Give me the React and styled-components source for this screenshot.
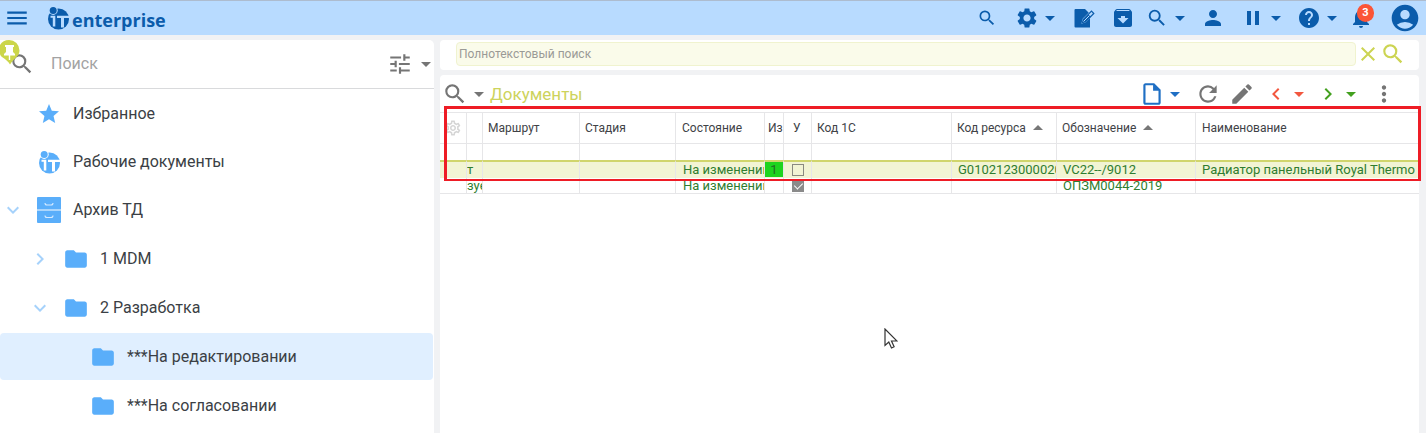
import React from "react";
import styled, { createGlobalStyle } from "styled-components";
import {
  MdMenu, MdSearch, MdSettings, MdOutlineSettings, MdArrowDropDown, MdArrowDropUp, MdArchive,
  MdPerson, MdPause, MdHelp, MdNotifications, MdAccountCircle, MdTune, MdStar,
  MdExpandMore, MdChevronRight, MdChevronLeft, MdFolder, MdClose, MdRefresh,
  MdEdit, MdMoreVert, MdOutlineInsertDriveFile,
} from "react-icons/md";

const Global = createGlobalStyle`
  * { box-sizing: border-box; }
  body { margin: 0; background: #f1f2f4; font-family: Roboto, "Open Sans", sans-serif; color: #3c4043; }
  button { border: 0; padding: 0; background: none; font: inherit; color: inherit; cursor: pointer; }
  svg { display: block; flex: none; }
`;

const GAPS = { s: 6, m: 10, l: 16 };

const Page = styled.div`
  min-height: 100vh;
  display: flex;
  flex-direction: column;
`;

const Header = styled.header`
  height: 35px;
  flex: none;
  display: flex;
  align-items: center;
  padding: 0 5px;
  border-top: 1px solid #adbccf;
  background: #b8dbff;
  color: #0b5cab;
`;

const Brand = styled.a`
  display: flex;
  align-items: center;
  gap: 2px;
  margin-left: 17px;
  color: inherit;
  text-decoration: none;
  font: 700 18px/24px "Open Sans", sans-serif;
`;

const BrandName = styled.span`
  padding-top: 3px;
`;

const Tools = styled.div`
  display: flex;
  align-items: center;
  margin-left: auto;
`;

const ToolGroup = styled.div`
  display: flex;
  align-items: center;
  margin-left: ${(p) => GAPS[p.$gap || "m"]}px;
  color: ${(p) => p.$color || "inherit"};
`;

const IconButton = styled.button`
  width: ${(p) => p.$w || 24}px;
  height: 28px;
  display: flex;
  align-items: center;
  justify-content: center;
  position: relative;
`;

const Badge = styled.span`
  position: absolute;
  left: 8px;
  top: 0;
  width: 17px;
  height: 18px;
  border-radius: 9px;
  background: #fb5537;
  color: #fff;
  font-size: 11px;
  font-weight: 700;
  line-height: 18px;
  text-align: center;
`;

const Main = styled.main`
  flex: 1;
  display: grid;
  grid-template-columns: 434px minmax(0, 1fr);
  column-gap: 6px;
  padding: 5px 7px 0 0;
`;

const Sidebar = styled.aside`
  position: relative;
  background: #fff;
  border-radius: 0 5px 0 0;
`;

const SideSearch = styled.div`
  height: 49px;
  display: flex;
  align-items: center;
  padding-left: 9px;
  border-bottom: 1px solid #d9dadc;
  color: #757575;
`;

const SideInput = styled.input`
  flex: 1;
  min-width: 0;
  margin-left: 14px;
  border: 0;
  outline: 0;
  background: none;
  font: 16px/24px Roboto, sans-serif;
  &::placeholder { color: #a3a3a3; opacity: 1; }
`;

const SideActions = styled.div`
  display: flex;
  align-items: center;
  gap: 2px;
  margin-right: -3px;
`;

const Pin = styled.span`
  position: absolute;
  left: 0;
  top: 0;
`;

const Tree = styled.ul`
  list-style: none;
  margin: 0;
  padding: 0 1px 0 0;
`;

const TreeRow = styled.button`
  width: 100%;
  height: 47px;
  margin-top: ${(p) => (p.$level ? 2 : 1)}px;
  padding-left: ${(p) => p.$level * 27}px;
  display: flex;
  align-items: center;
  gap: 10px;
  border-radius: 4px;
  background: ${(p) => (p.$active ? "#e0efff" : "transparent")};
  color: #3b3f45;
  font-size: 16px;
  line-height: 24px;
`;

const TreeSlot = styled.span`
  width: 26px;
  display: flex;
  justify-content: center;
  color: ${(p) => p.$color};
`;

const TreeLabel = styled.span`
  padding-left: 1px;
`;

const Content = styled.section`
  display: flex;
  flex-direction: column;
  gap: 5px;
  min-width: 0;
`;

const SearchPanel = styled.div`
  height: 30px;
  display: flex;
  align-items: flex-start;
  padding: 2px 13px 0 16px;
  border-radius: 4px;
  background: #fff;
`;

const FullText = styled.input`
  flex: 1;
  min-width: 0;
  height: 24px;
  padding: 0 2px;
  border: 1px solid #f0f3cf;
  border-radius: 4px;
  outline: 0;
  background: #fafbea;
  font: 12px/20px Roboto, sans-serif;
  &::placeholder { color: #9a9a96; opacity: 1; }
`;

const SearchActions = styled.div`
  display: flex;
  height: 24px;
  align-items: center;
  color: #ccd452;
`;

const Panel = styled.div`
  position: relative;
  flex: 1;
  border-radius: 4px 4px 0 0;
  background: #fff;
`;

const Toolbar = styled.div`
  height: 37px;
  display: flex;
  align-items: center;
  padding: 0 23px 0 2px;
  color: #757575;
`;

const Title = styled.h1`
  margin: 0;
  color: #cdd35c;
  font-size: 17px;
  line-height: 24px;
  font-weight: 400;
`;

const Frame = styled.div`
  position: absolute;
  left: 4px;
  right: -2px;
  top: 31px;
  height: 75px;
  border: 3px solid #ee1c25;
  border-bottom-width: 2px;
  pointer-events: none;
`;

const Grid = styled.table`
  width: 100%;
  table-layout: fixed;
  border-collapse: separate;
  border-spacing: 0;
`;

const Th = styled.th`
  height: ${(p) => (p.$filter ? 16 : 32)}px;
  padding: 0 0 0 ${(p) => p.$pad ?? 5}px;
  border: solid #e6e6e8;
  border-width: ${(p) => (p.$filter ? "0 1px 0 0" : "1px 1px 1px 0")};
  overflow: hidden;
  white-space: nowrap;
  text-align: left;
  color: #404246;
  font-size: 12px;
  line-height: 16px;
  font-weight: 400;
  &:last-child { border-right: 0; }
`;

const SortButton = styled.button`
  display: flex;
  align-items: center;
  height: 16px;
  svg { color: #777; }
`;

const Row = styled.tr`
  background: ${(p) => (p.$active ? "#f2f4d4" : "#fff")};
`;

const Td = styled.td`
  height: ${(p) => (p.$active ? 18 : 16)}px;
  padding: 0 0 0 ${(p) => p.$pad ?? 6}px;
  border: solid #e6e6e8;
  border-width: 0 1px 1px 0;
  ${(p) => p.$active && "border-top: 2px solid #d0d56c; border-bottom: 0;"}
  overflow: hidden;
  white-space: nowrap;
  vertical-align: top;
  color: #2f7d2f;
  font-size: 13px;
  line-height: 15px;
  &:last-child { border-right: 0; }
`;

const Revision = styled.span`
  display: block;
  width: 18px;
  height: 15px;
  background: #1ed41e;
  color: #236b23;
  text-align: center;
`;

const Check = styled.input`
  appearance: none;
  display: grid;
  place-items: center;
  width: 12px;
  height: 12px;
  margin: 2px 0 0 0;
  border: 1px solid #8a8a80;
  &:checked { background: #8a8a8a; border-color: #8a8a8a; }
  &:checked::after {
    content: "";
    width: 4px;
    height: 7px;
    margin-top: -2px;
    border: solid #fff;
    border-width: 0 1px 1px 0;
    transform: rotate(45deg);
  }
`;

const Pointer = styled.svg`
  position: absolute;
  left: 444px;
  top: 253px;
`;

function ItMark({ bg }) {
  return (
    <svg width="24" height="24" viewBox="0 0 24 24" aria-hidden="true">
      <circle cx="12.5" cy="13" r="10.5" fill="currentColor" />
      <circle cx="7.2" cy="4.400" r="4.500" fill={bg} />
      <circle cx="7.2" cy="4.400" r="3.500" fill="currentColor" />
      <path d="M4.500 9.800h4.800v10.700H6.800v-8.800H4.500zM11 9.800h12.500v2.200H18v9.500h-3v-9.500h-4z" fill={bg} />
    </svg>
  );
}

const EditDocument = ({ bg }) => (
  <svg width="24" height="24" viewBox="0 0 24 24" aria-hidden="true">
    <path d="M4.500 3H14l5 5v13.500H4.500q-1 0-1-1V4q0-1 1-1z" fill="currentColor" />
    <path d="M11.500 16.500l1-3.500 8-8 2.300 2.300-8 8z" fill={bg} stroke={bg} strokeWidth="1.500" />
    <path d="M11.500 16.500l1-3.300 8-8 2.300 2.300-8 8z" fill="none" stroke="currentColor" strokeWidth="1.200" />
    <path d="M11.500 16.500l1-3.300 5-5 2.300 2.300-5 5z" fill="currentColor" />
    <path d="M12.500 15.500l6-6" stroke={bg} strokeWidth="1" />
  </svg>
);

const Cabinet = () => (
  <svg width="24" height="26" viewBox="0 0 24 26" aria-hidden="true">
    <path d="M0 1q0-1 1-1h22q1 0 1 1v11.400H0zM0 13.600h24V25q0 1-1 1H1q-1 0-1-1z" fill="currentColor" />
    <path d="M8 6q0 2 2 2h4q2 0 2-2M8 18.500q0 2 2 2h4q2 0 2-2" fill="none" stroke="#d5eaff" strokeWidth="1.100" />
  </svg>
);

const Caret = ({ label, size = 24 }) => (
  <IconButton $w={22} aria-label={label}><MdArrowDropDown size={size} /></IconButton>
);

const BLUE = "#5aaefa";

const tree = [
  { level: 0, icon: <MdStar size={24} />, text: "Избранное" },
  { level: 0, icon: <ItMark bg="#fff" />, text: "Рабочие документы" },
  { level: 0, icon: <Cabinet />, text: "Архив ТД", state: "open" },
  { level: 1, icon: <MdFolder size={26} />, text: "1 MDM", state: "closed" },
  { level: 1, icon: <MdFolder size={26} />, text: "2 Разработка", state: "open" },
  { level: 2, icon: <MdFolder size={26} />, text: "***На редактировании", active: true },
  { level: 2, icon: <MdFolder size={26} />, text: "***На согласовании" },
];

const columns = [
  { w: 27, label: <MdOutlineSettings size={18} color="#d5d5d5" />, pad: 4 },
  { w: 16, label: "" },
  { w: 97, label: "Маршрут" },
  { w: 96, label: "Стадия" },
  { w: 89, label: "Состояние", pad: 6 },
  { w: 19, label: "Изм", pad: 3 },
  { w: 28, label: "У", pad: 9 },
  { w: 140, label: "Код 1С" },
  { w: 105, label: "Код ресурса", sort: true },
  { w: 139, label: "Обозначение", sort: true },
  { w: undefined, label: "Наименование", pad: 6 },
];

const rows = [
  { active: true, kind: "т", state: "На изменении", rev: "1", checked: false, code: "G01021230000201", mark: "VC22--/9012", name: "Радиатор панельный Royal Thermo" },
  { active: false, kind: "зує", state: "На изменении", rev: "", checked: true, code: "", mark: "ОПЗМ0044-2019", name: "" },
];

export default function App() {
  return (
    <Page>
      <Global />
      <Header>
        <IconButton aria-label="Меню"><MdMenu size={26} /></IconButton>
        <Brand href="#"><ItMark bg="#b8dbff" /><BrandName>enterprise</BrandName></Brand>
        <Tools>
          <ToolGroup><IconButton aria-label="Найти"><MdSearch size={20} /></IconButton></ToolGroup>
          <ToolGroup $gap="l"><IconButton aria-label="Настройки"><MdSettings size={24} /></IconButton><Caret label="Меню настроек" /></ToolGroup>
          <ToolGroup><IconButton aria-label="Править"><EditDocument bg="#b8dbff" /></IconButton></ToolGroup>
          <ToolGroup $gap="l"><IconButton aria-label="Архив"><MdArchive size={24} /></IconButton></ToolGroup>
          <ToolGroup><IconButton aria-label="Поиск"><MdSearch size={22} /></IconButton><Caret label="Меню поиска" /></ToolGroup>
          <ToolGroup><IconButton aria-label="Пользователь"><MdPerson size={24} /></IconButton></ToolGroup>
          <ToolGroup $gap="l"><IconButton aria-label="Пауза"><MdPause size={24} /></IconButton><Caret label="Меню паузы" /></ToolGroup>
          <ToolGroup><IconButton aria-label="Справка"><MdHelp size={24} /></IconButton><Caret label="Меню справки" /></ToolGroup>
          <ToolGroup $gap="s"><IconButton aria-label="Уведомления"><MdNotifications size={24} /><Badge>3</Badge></IconButton></ToolGroup>
          <ToolGroup $gap="l"><IconButton $w={32} aria-label="Профиль"><MdAccountCircle size={32} /></IconButton></ToolGroup>
        </Tools>
      </Header>
      <Main>
        <Sidebar>
          <SideSearch>
            <MdSearch size={26} />
            <SideInput type="text" placeholder="Поиск" aria-label="Поиск" />
            <SideActions>
              <IconButton $w={26} aria-label="Фильтр"><MdTune size={26} /></IconButton>
              <Caret label="Меню фильтра" />
            </SideActions>
          </SideSearch>
          <Pin>
            <svg width="20" height="25" viewBox="0 0 20 25" aria-hidden="true">
              <path d="M9 0a10.500 10.500 0 0 1 10.500 10.500c0 6-6 8-9.500 14C7 19 0 17 0 14V5Q3 0 9 0z" fill="#ccd64a" />
              <path d="M5 5h9v2h-1v5l2 2v1.500H10.200V20H8.800v-4.500H4V14l2-2V7H5z" fill="#fff" />
            </svg>
          </Pin>
          <Tree>
            {tree.map((n) => (
              <li key={n.text}>
                <TreeRow $level={n.level} $active={n.active}>
                  <TreeSlot $color="#a6d2fb">
                    {n.state === "open" && <MdExpandMore size={24} />}
                    {n.state === "closed" && <MdChevronRight size={24} />}
                  </TreeSlot>
                  <TreeSlot $color={BLUE}>{n.icon}</TreeSlot>
                  <TreeLabel>{n.text}</TreeLabel>
                </TreeRow>
              </li>
            ))}
          </Tree>
        </Sidebar>
        <Content>
          <SearchPanel>
            <FullText type="text" placeholder="Полнотекстовый поиск" aria-label="Полнотекстовый поиск" />
            <SearchActions>
              <IconButton $w={24} aria-label="Очистить"><MdClose size={24} /></IconButton>
              <IconButton $w={26} aria-label="Искать"><MdSearch size={26} /></IconButton>
            </SearchActions>
          </SearchPanel>
          <Panel>
            <Toolbar>
              <IconButton $w={26} aria-label="Поиск"><MdSearch size={26} /></IconButton>
              <Caret label="Меню поиска" />
              <Title>Документы</Title>
              <Tools>
                <ToolGroup $color="#1f6fc4"><IconButton aria-label="Создать"><MdOutlineInsertDriveFile size={26} /></IconButton><Caret label="Меню создания" /></ToolGroup>
                <ToolGroup><IconButton aria-label="Обновить"><MdRefresh size={26} /></IconButton></ToolGroup>
                <ToolGroup><IconButton aria-label="Изменить"><MdEdit size={26} /></IconButton></ToolGroup>
                <ToolGroup $color="#f2573f"><IconButton aria-label="Назад"><MdChevronLeft size={24} /></IconButton><Caret label="Меню назад" /></ToolGroup>
                <ToolGroup $gap="s" $color="#43a01f"><IconButton aria-label="Вперёд"><MdChevronRight size={24} /></IconButton><Caret label="Меню вперёд" /></ToolGroup>
                <ToolGroup><IconButton aria-label="Ещё"><MdMoreVert size={26} /></IconButton></ToolGroup>
              </Tools>
            </Toolbar>
            <Grid>
              <colgroup>{columns.map((c, i) => <col key={i} width={c.w} />)}</colgroup>
              <thead>
                <tr>
                  {columns.map((c, i) => (
                    <Th key={i} $pad={c.pad}>
                      {c.sort ? <SortButton>{c.label}<MdArrowDropUp size={24} /></SortButton> : c.label}
                    </Th>
                  ))}
                </tr>
                <tr>{columns.map((c, i) => <Th key={i} $filter />)}</tr>
              </thead>
              <tbody>
                {rows.map((r) => (
                  <Row key={r.mark} $active={r.active}>
                    <Td $active={r.active} />
                    <Td $active={r.active} $pad={0}>{r.kind}</Td>
                    <Td $active={r.active} />
                    <Td $active={r.active} />
                    <Td $active={r.active} $pad={7}>{r.state}</Td>
                    <Td $active={r.active} $pad={0}>{r.rev && <Revision>{r.rev}</Revision>}</Td>
                    <Td $active={r.active} $pad={8}><Check type="checkbox" defaultChecked={r.checked} aria-label={r.mark} /></Td>
                    <Td $active={r.active} />
                    <Td $active={r.active}>{r.code}</Td>
                    <Td $active={r.active}>{r.mark}</Td>
                    <Td $active={r.active} $pad={6}>{r.name}</Td>
                  </Row>
                ))}
              </tbody>
            </Grid>
            <Frame />
            <Pointer width="14" height="22" viewBox="0 0 14 22" aria-hidden="true">
              <path d="M1 1v16.500l3.800-3.500 2.700 6 2.600-1.200-2.600-5.800H13z" fill="#fff" stroke="#333" strokeWidth="1.200" />
            </Pointer>
          </Panel>
        </Content>
      </Main>
    </Page>
  );
}
